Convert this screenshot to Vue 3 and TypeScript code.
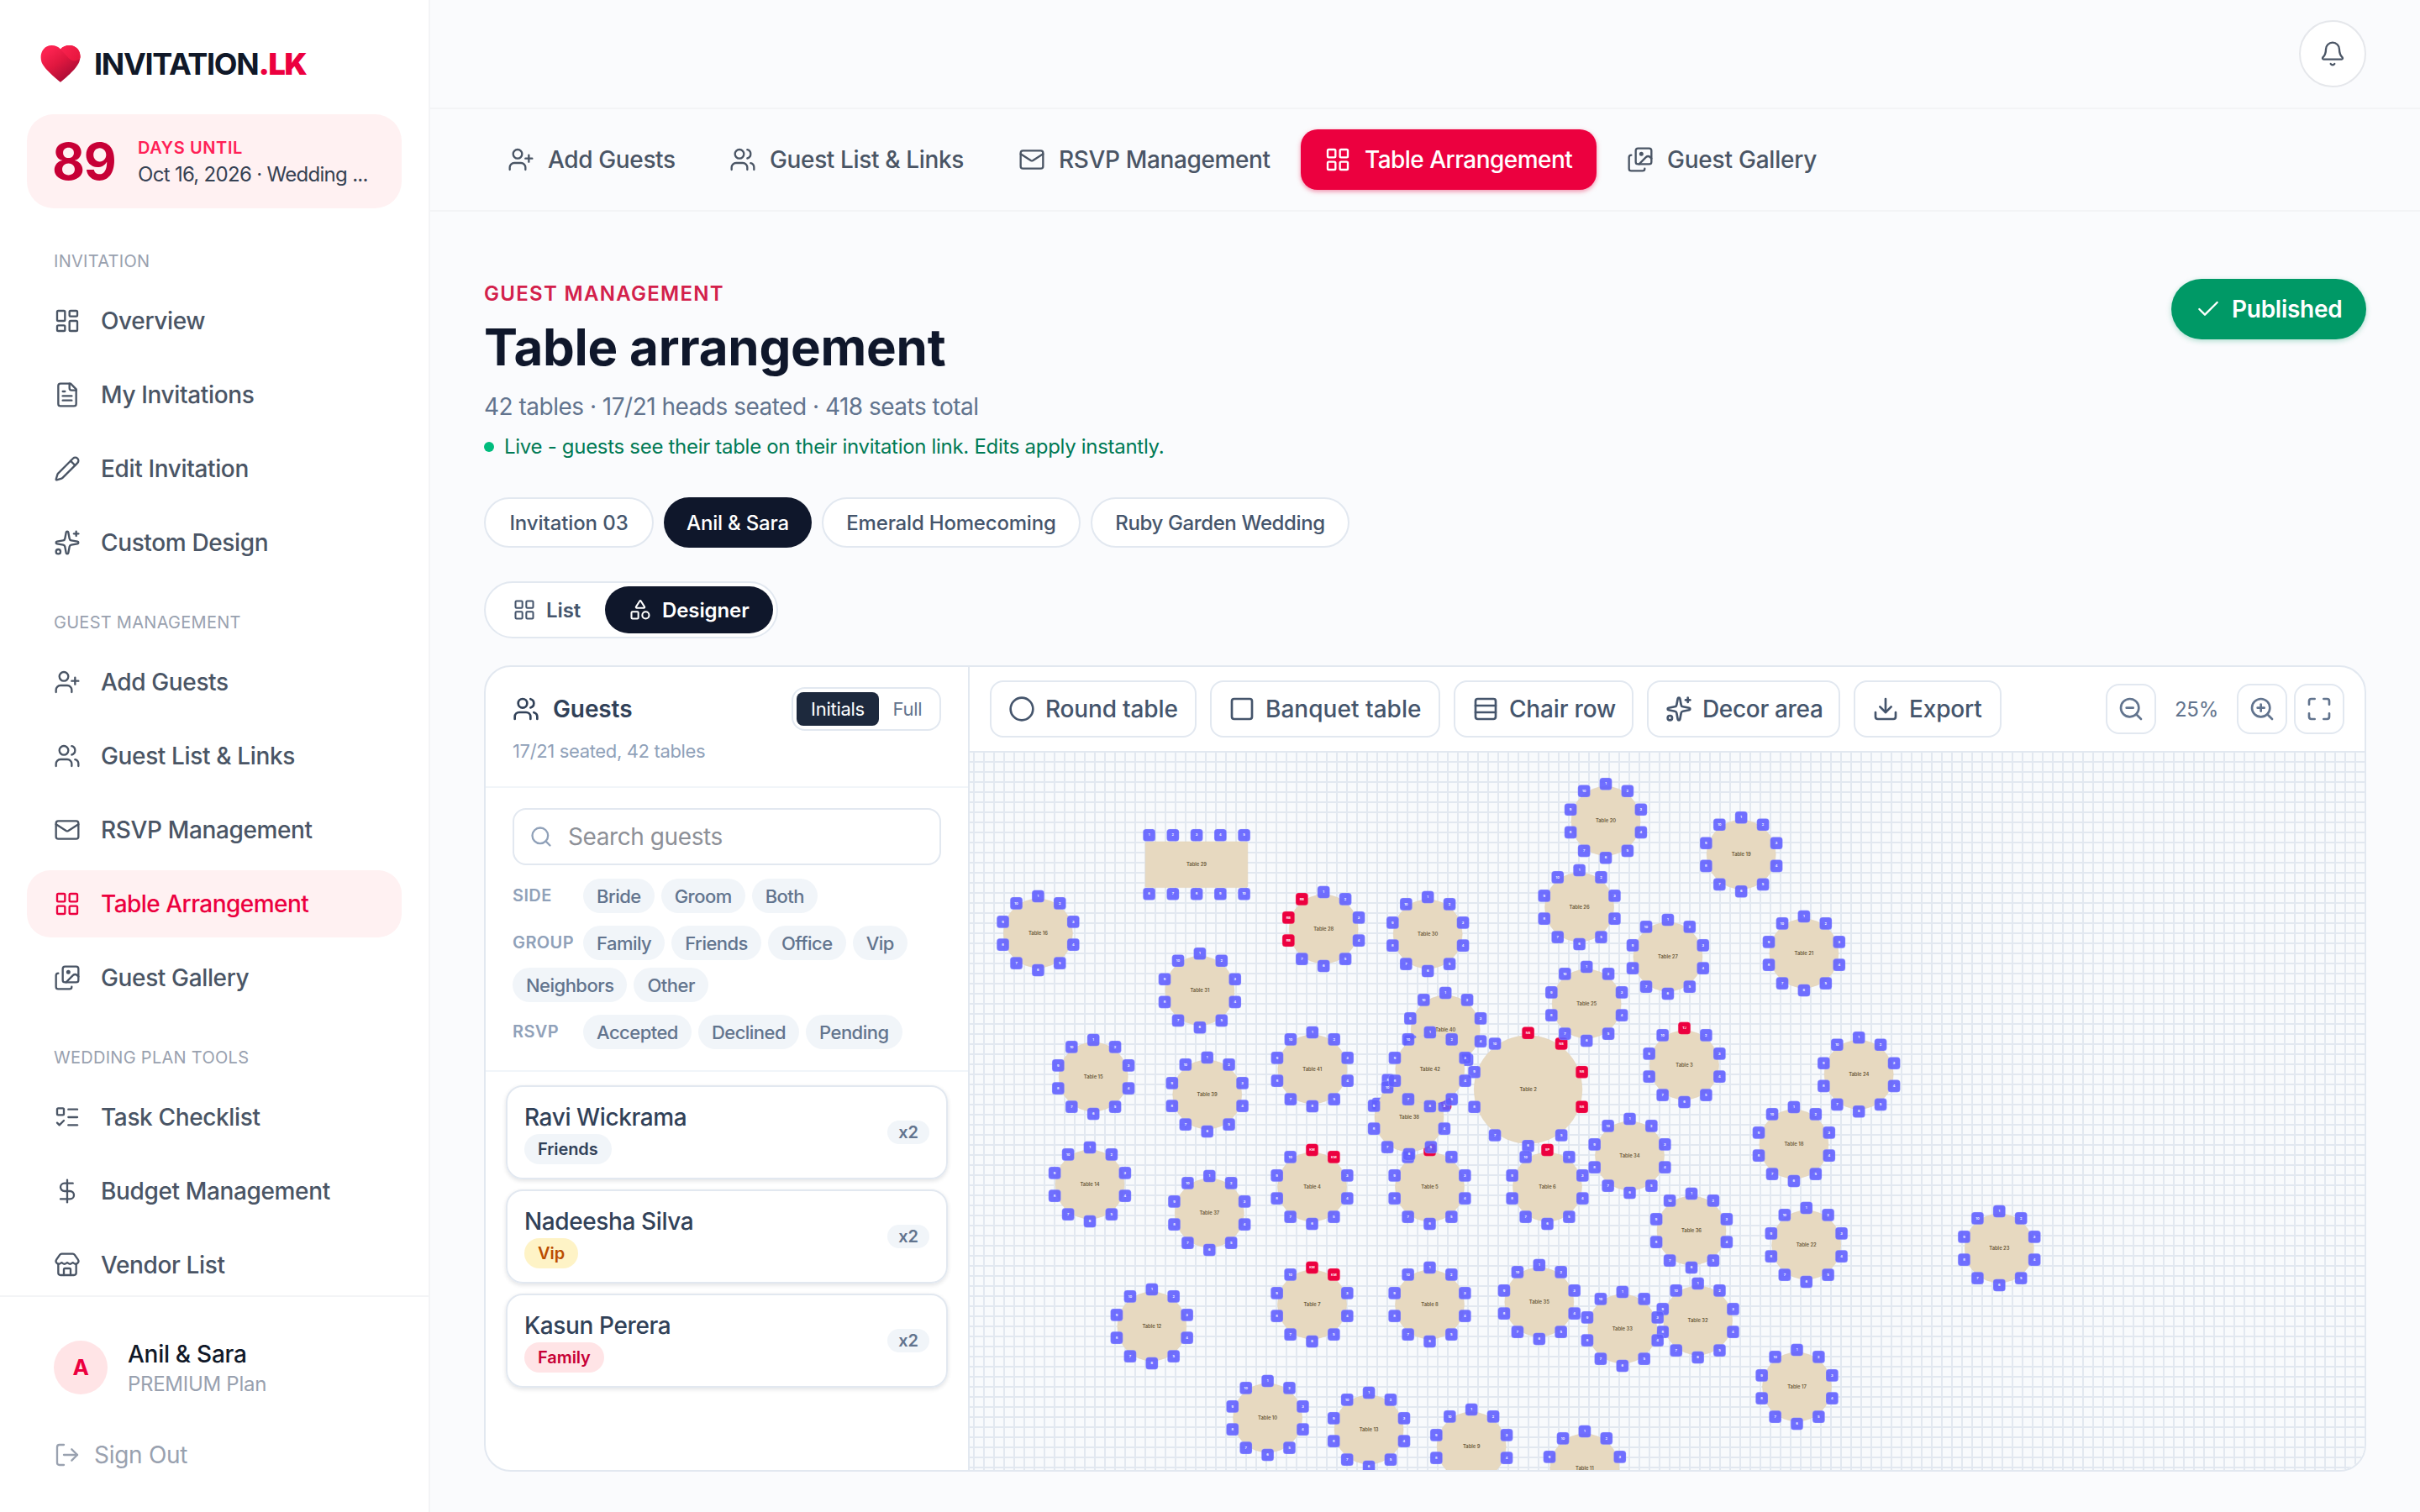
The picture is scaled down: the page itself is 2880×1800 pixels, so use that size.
<script setup lang="ts">
const icons: Record<string, string> = {
  dashboard:
    '<rect width="7" height="9" x="3" y="3" rx="1"/><rect width="7" height="5" x="14" y="3" rx="1"/><rect width="7" height="9" x="14" y="12" rx="1"/><rect width="7" height="5" x="3" y="16" rx="1"/>',
  file:
    '<path d="M15 2H6a2 2 0 0 0-2 2v16a2 2 0 0 0 2 2h12a2 2 0 0 0 2-2V7Z"/><path d="M14 2v4a2 2 0 0 0 2 2h4"/><path d="M10 9H8"/><path d="M16 13H8"/><path d="M16 17H8"/>',
  pencil:
    '<path d="M21.174 6.812a1 1 0 0 0-3.986-3.987L3.842 16.174a2 2 0 0 0-.5.83l-1.321 4.352a.5.5 0 0 0 .623.622l4.353-1.32a2 2 0 0 0 .83-.497z"/><path d="m15 5 4 4"/>',
  sparkles:
    '<path d="M11.017 2.814a1 1 0 0 1 1.966 0l1.051 5.558a2 2 0 0 0 1.594 1.594l5.558 1.051a1 1 0 0 1 0 1.966l-5.558 1.051a2 2 0 0 0-1.594 1.594l-1.051 5.558a1 1 0 0 1-1.966 0l-1.051-5.558a2 2 0 0 0-1.594-1.594l-5.558-1.051a1 1 0 0 1 0-1.966l5.558-1.051a2 2 0 0 0 1.594-1.594z"/><path d="M20 2v4"/><path d="M22 4h-4"/><circle cx="4" cy="20" r="2"/>',
  userPlus:
    '<path d="M16 21v-2a4 4 0 0 0-4-4H6a4 4 0 0 0-4 4v2"/><circle cx="9" cy="7" r="4"/><path d="M19 8v6"/><path d="M22 11h-6"/>',
  users:
    '<path d="M16 21v-2a4 4 0 0 0-4-4H6a4 4 0 0 0-4 4v2"/><path d="M16 3.128a4 4 0 0 1 0 7.744"/><path d="M22 21v-2a4 4 0 0 0-3-3.87"/><circle cx="9" cy="7" r="4"/>',
  mail:
    '<path d="m22 7-8.991 5.727a2 2 0 0 1-2.009 0L2 7"/><rect x="2" y="4" width="20" height="16" rx="2"/>',
  grid:
    '<rect width="7" height="7" x="3" y="3" rx="1"/><rect width="7" height="7" x="14" y="3" rx="1"/><rect width="7" height="7" x="14" y="14" rx="1"/><rect width="7" height="7" x="3" y="14" rx="1"/>',
  images:
    '<path d="m22 11-1.296-1.296a2.4 2.4 0 0 0-3.408 0L11 16"/><path d="M4 8a2 2 0 0 0-2 2v10a2 2 0 0 0 2 2h10a2 2 0 0 0 2-2"/><circle cx="13" cy="7" r="1" fill="currentColor"/><rect x="8" y="2" width="14" height="14" rx="2"/>',
  todo:
    '<path d="M13 5h8"/><path d="M13 12h8"/><path d="M13 19h8"/><path d="m3 17 2 2 4-4"/><rect x="3" y="4" width="6" height="6" rx="1"/>',
  dollar:
    '<path d="M12 2v20"/><path d="M17 5H9.5a3.5 3.5 0 0 0 0 7h5a3.5 3.5 0 0 1 0 7H6"/>',
  store:
    '<path d="M15 21v-5a1 1 0 0 0-1-1h-4a1 1 0 0 0-1 1v5"/><path d="M17.774 10.31a1.12 1.12 0 0 0-1.549 0 2.5 2.5 0 0 1-3.451 0 1.12 1.12 0 0 0-1.548 0 2.5 2.5 0 0 1-3.452 0 1.12 1.12 0 0 0-1.549 0 2.5 2.5 0 0 1-3.77-3.248l2.889-4.184A2 2 0 0 1 7 2h10a2 2 0 0 1 1.653.873l2.895 4.192a2.5 2.5 0 0 1-3.774 3.244"/><path d="M4 10.95V19a2 2 0 0 0 2 2h12a2 2 0 0 0 2-2v-8.05"/>',
  logout:
    '<path d="m16 17 5-5-5-5"/><path d="M21 12H9"/><path d="M9 21H5a2 2 0 0 1-2-2V5a2 2 0 0 1 2-2h4"/>',
  bell:
    '<path d="M10.268 21a2 2 0 0 0 3.464 0"/><path d="M3.262 15.326A1 1 0 0 0 4 17h16a1 1 0 0 0 .74-1.673C19.41 13.956 18 12.499 18 8A6 6 0 0 0 6 8c0 4.499-1.411 5.956-2.738 7.326"/>',
  check: '<path d="M20 6 9 17l-5-5"/>',
  shapes:
    '<path d="M8.3 10a.7.7 0 0 1-.626-1.079L11.4 3a.7.7 0 0 1 1.198-.043L16.3 8.9a.7.7 0 0 1-.572 1.1Z"/><rect x="3" y="14" width="7" height="7" rx="1"/><circle cx="17.5" cy="17.5" r="3.5"/>',
  search: '<path d="m21 21-4.34-4.34"/><circle cx="11" cy="11" r="8"/>',
  circle: '<circle cx="12" cy="12" r="10"/>',
  square: '<rect width="18" height="18" x="3" y="3" rx="2"/>',
  rows: '<rect width="18" height="18" x="3" y="3" rx="2"/><path d="M21 9H3"/><path d="M21 15H3"/>',
  download:
    '<path d="M12 15V3"/><path d="M21 15v4a2 2 0 0 1-2 2H5a2 2 0 0 1-2-2v-4"/><path d="m7 10 5 5 5-5"/>',
  zoomOut: '<circle cx="11" cy="11" r="8"/><path d="m21 21-4.35-4.35"/><path d="M8 11h6"/>',
  zoomIn: '<circle cx="11" cy="11" r="8"/><path d="m21 21-4.35-4.35"/><path d="M11 8v6"/><path d="M8 11h6"/>',
  maximize:
    '<path d="M8 3H5a2 2 0 0 0-2 2v3"/><path d="M21 8V5a2 2 0 0 0-2-2h-3"/><path d="M3 16v3a2 2 0 0 0 2 2h3"/><path d="M16 21h3a2 2 0 0 0 2-2v-3"/>',
}

interface NavItem { icon: string; label: string; active?: boolean }

const menu: { title: string; items: NavItem[] }[] = [
  {
    title: 'INVITATION',
    items: [
      { icon: 'dashboard', label: 'Overview' },
      { icon: 'file', label: 'My Invitations' },
      { icon: 'pencil', label: 'Edit Invitation' },
      { icon: 'sparkles', label: 'Custom Design' },
    ],
  },
  {
    title: 'GUEST MANAGEMENT',
    items: [
      { icon: 'userPlus', label: 'Add Guests' },
      { icon: 'users', label: 'Guest List & Links' },
      { icon: 'mail', label: 'RSVP Management' },
      { icon: 'grid', label: 'Table Arrangement', active: true },
      { icon: 'images', label: 'Guest Gallery' },
    ],
  },
  {
    title: 'WEDDING PLAN TOOLS',
    items: [
      { icon: 'todo', label: 'Task Checklist' },
      { icon: 'dollar', label: 'Budget Management' },
      { icon: 'store', label: 'Vendor List' },
    ],
  },
]

const tabs: NavItem[] = menu[1].items

const invitations = ['Invitation 03', 'Anil & Sara', 'Emerald Homecoming', 'Ruby Garden Wedding']

const filters = [
  { label: 'SIDE', options: ['Bride', 'Groom', 'Both'] },
  { label: 'GROUP', options: ['Family', 'Friends', 'Office', 'Vip', 'Neighbors', 'Other'] },
  { label: 'RSVP', options: ['Accepted', 'Declined', 'Pending'] },
]

const guests = [
  { name: 'Ravi Wickrama', group: 'Friends', heads: 2 },
  { name: 'Nadeesha Silva', group: 'Vip', heads: 2 },
  { name: 'Kasun Perera', group: 'Family', heads: 2 },
]

const tools: NavItem[] = [
  { icon: 'circle', label: 'Round table' },
  { icon: 'square', label: 'Banquet table' },
  { icon: 'rows', label: 'Chair row' },
  { icon: 'sparkles', label: 'Decor area' },
  { icon: 'download', label: 'Export' },
]

/* Round tables: number, centre x, centre y */
const roundTables: [number, number, number][] = [
  [1, 1680, 1314], [2, 1818.6, 1297], [3, 2004.5, 1268], [4, 1561.5, 1413],
  [5, 1701.5, 1413], [6, 1841.5, 1413], [7, 1561.5, 1553], [8, 1701.5, 1553],
  [9, 1751.2, 1722], [10, 1508.6, 1688], [11, 1885.9, 1748], [12, 1370.8, 1579],
  [13, 1629.1, 1702], [14, 1297, 1410], [15, 1301.2, 1282], [16, 1235.4, 1111],
  [17, 2138.5, 1651], [18, 2134.9, 1362], [19, 2072.2, 1017.3], [20, 1911, 977.3],
  [21, 2146.9, 1135], [22, 2149.7, 1482], [23, 2379.3, 1486], [24, 2212.2, 1279.3],
  [25, 1888.2, 1195], [26, 1879.6, 1080], [27, 1984.9, 1139], [28, 1575.2, 1106],
  [30, 1699.2, 1112], [31, 1427.9, 1179.3], [32, 2020.6, 1572], [33, 1930.8, 1582],
  [34, 1939.5, 1376], [35, 1831.8, 1550], [36, 2013, 1465], [37, 1439.3, 1444],
  [38, 1677, 1330], [39, 1436.7, 1303], [40, 1720.2, 1226], [41, 1561.8, 1273],
  [42, 1701.8, 1273],
]

/* Seated guests by table and chair */
const seated: Record<number, Record<number, string>> = {
  1: { 1: 'AF', 2: 'AF', 3: 'AF' },
  2: { 1: 'NS', 2: 'NS', 3: 'NS', 4: 'NS' },
  3: { 1: 'TJ' },
  4: { 1: 'KM', 2: 'KM' },
  5: { 1: 'SP' },
  6: { 1: 'SP' },
  7: { 1: 'KM', 2: 'KM' },
  28: { 8: 'RB', 9: 'RB', 10: 'RB' },
}

/* Lower edge of the visible part of the room */
const roomBottom = 1750

interface Chair { x: number; y: number; text: string; taken: boolean }

const tables = roundTables.map(([id, x, y]) => {
  const count = id === 1 ? 8 : 10
  const r = id === 1 ? 37 : id === 2 ? 64.3 : 41
  const orbit = r + 3
  const chairs: Chair[] = Array.from({ length: count }, (_, i) => {
    const a = (i * 2 * Math.PI) / count
    const guest = seated[id]?.[i + 1]
    return {
      x: x + Math.sin(a) * orbit,
      y: y - Math.cos(a) * orbit,
      text: guest ?? String(i + 1),
      taken: !!guest,
    }
  }).filter((c) => c.y - 7.5 < roomBottom)
  return { id, x, y, r, chairs }
})

const banquet = {
  x: 1424,
  y: 1029.3,
  chairs: Array.from({ length: 10 }, (_, i) => ({
    x: 1367.6 + (i % 5) * 28.25,
    y: i < 5 ? 994.3 : 1064.3,
    text: String(i + 1),
  })),
}
</script>

<template>
  <div class="app">
    <aside class="sidebar">
      <div class="logo">
        <svg class="heart" viewBox="0 0 48 44">
          <defs>
            <linearGradient id="heartBody" x1="0.25" y1="0.1" x2="0.75" y2="0.75">
              <stop offset="0" stop-color="#fb2350" />
              <stop offset="0.5" stop-color="#e0173f" />
              <stop offset="1" stop-color="#b40e37" />
            </linearGradient>
            <linearGradient id="heartFlap" x1="0" y1="0" x2="1" y2="0.6">
              <stop offset="0" stop-color="#fb2350" />
              <stop offset="1" stop-color="#e8173f" />
            </linearGradient>
          </defs>
          <path fill="url(#heartBody)" d="M24 44C21 41 5 29 1.500 20C-1.500 11 3 0 13.500 0C18 0 21.500 1.500 24 4.500C26.500 1.500 30 0 34.500 0C45 0 49.500 10 46.500 19C43 29 27 41 24 44Z" />
          <path fill="url(#heartFlap)" d="M24 4.500C26.500 1.500 30 0 34.500 0C44 0 48.500 8 47.500 15C44 19.500 38 19.500 34 15.500C30.500 11.500 27 8 24 4.500Z" />
        </svg>
        <span class="brand">INVITATION<b>.LK</b></span>
      </div>

      <div class="countdown">
        <span class="days">89</span>
        <div class="countdown-text">
          <span class="until">DAYS UNTIL</span>
          <span class="date">Oct 16, 2026 · Wedding ...</span>
        </div>
      </div>

      <nav class="menu">
        <section v-for="g in menu" :key="g.title">
          <h2>{{ g.title }}</h2>
          <a v-for="it in g.items" :key="it.label" class="item" :class="{ active: it.active }">
            <svg class="icon" viewBox="0 0 24 24" v-html="icons[it.icon]" />
            <span>{{ it.label }}</span>
          </a>
        </section>
      </nav>

      <footer class="account">
        <div class="profile">
          <span class="avatar">A</span>
          <div class="who">
            <span class="name">Anil &amp; Sara</span>
            <span class="plan">PREMIUM Plan</span>
          </div>
        </div>
        <a class="signout">
          <svg class="icon" viewBox="0 0 24 24" v-html="icons.logout" />
          <span>Sign Out</span>
        </a>
      </footer>
    </aside>

    <div class="main">
      <header class="topbar">
        <button class="bell"><svg class="icon" viewBox="0 0 24 24" v-html="icons.bell" /></button>
      </header>

      <nav class="tabs">
        <a v-for="t in tabs" :key="t.label" class="tab" :class="{ active: t.active }">
          <svg class="icon" viewBox="0 0 24 24" v-html="icons[t.icon]" />
          <span>{{ t.label }}</span>
        </a>
      </nav>

      <main class="content">
        <div class="heading">
          <div>
            <p class="eyebrow">GUEST MANAGEMENT</p>
            <h1>Table arrangement</h1>
            <p class="stats">42 tables · 17/21 heads seated · 418 seats total</p>
            <p class="live"><i></i><span>Live - guests see their table on their invitation link. Edits apply instantly.</span></p>
          </div>
          <button class="published">
            <svg class="icon" viewBox="0 0 24 24" v-html="icons.check" />
            <span>Published</span>
          </button>
        </div>

        <div class="pills">
          <button v-for="(p, i) in invitations" :key="p" class="pill" :class="{ active: i === 1 }"><span>{{ p }}</span></button>
        </div>

        <div class="views">
          <button class="view"><svg class="icon" viewBox="0 0 24 24" v-html="icons.grid" /><span>List</span></button>
          <button class="view active"><svg class="icon" viewBox="0 0 24 24" v-html="icons.shapes" /><span>Designer</span></button>
        </div>

        <div class="designer">
          <div class="panel">
            <div class="panel-head">
              <div class="panel-title">
                <svg class="icon" viewBox="0 0 24 24" v-html="icons.users" />
                <h3>Guests</h3>
                <div class="switch">
                  <button class="on">Initials</button>
                  <button>Full</button>
                </div>
              </div>
              <p>17/21 seated, 42 tables</p>
            </div>

            <div class="filters">
              <div class="search">
                <svg class="icon" viewBox="0 0 24 24" v-html="icons.search" />
                <span>Search guests</span>
              </div>
              <div v-for="f in filters" :key="f.label" class="filter">
                <span class="filter-label">{{ f.label }}</span>
                <button v-for="o in f.options" :key="o" class="chip">{{ o }}</button>
              </div>
            </div>

            <div class="guests">
              <div v-for="g in guests" :key="g.name" class="guest">
                <div>
                  <div class="guest-name">{{ g.name }}</div>
                  <span class="tag" :class="g.group.toLowerCase()">{{ g.group }}</span>
                </div>
                <span class="heads">x{{ g.heads }}</span>
              </div>
            </div>
          </div>

          <div class="stage">
            <div class="toolbar">
              <button v-for="t in tools" :key="t.label" class="tool">
                <svg class="icon" viewBox="0 0 24 24" v-html="icons[t.icon]" />
                <span>{{ t.label }}</span>
              </button>
              <div class="zoom">
                <button class="square"><svg class="icon" viewBox="0 0 24 24" v-html="icons.zoomOut" /></button>
                <span>25%</span>
                <button class="square"><svg class="icon" viewBox="0 0 24 24" v-html="icons.zoomIn" /></button>
                <button class="square"><svg class="icon" viewBox="0 0 24 24" v-html="icons.maximize" /></button>
              </div>
            </div>

            <svg class="canvas" viewBox="1154 896 1660 854">
              <defs>
                <pattern id="grid" x="1158" y="894" width="12" height="12" patternUnits="userSpaceOnUse">
                  <path class="grid-line" d="M0 0h12v2H2v10H0z" />
                </pattern>
              </defs>
              <rect x="1154" y="896" width="1660" height="854" fill="url(#grid)" />
              <g>
                <rect class="table" :x="banquet.x - 60.8" :y="banquet.y - 27.3" width="121.600" height="54.600" rx="2" />
                <text class="table-name" :x="banquet.x" :y="banquet.y + 2">Table 29</text>
                <g v-for="(c, i) in banquet.chairs" :key="i">
                  <rect class="chair" :x="c.x - 7.3" :y="c.y - 7.3" width="14.600" height="14.600" rx="3.500" />
                  <text class="seat" :x="c.x" :y="c.y + 1.1">{{ c.text }}</text>
                </g>
              </g>
              <g v-for="t in tables" :key="t.id">
                <circle class="table" :cx="t.x" :cy="t.y" :r="t.r" />
                <text class="table-name" :x="t.x" :y="t.y + 2">Table {{ t.id }}</text>
                <g v-for="(c, i) in t.chairs" :key="i">
                  <rect class="chair" :class="{ taken: c.taken }" :x="c.x - 7.3" :y="c.y - 7.3" width="14.600" height="14.600" rx="3.500" />
                  <text class="seat" :x="c.x" :y="c.y + 1.1">{{ c.text }}</text>
                </g>
              </g>
            </svg>
          </div>
        </div>
      </main>
    </div>
  </div>
</template>

<style>
body {
  margin: 0;
  background: #fafbfd;
}
</style>

<style scoped>
* {
  box-sizing: border-box;
  margin: 0;
  padding: 0;
}
button {
  font: inherit;
  letter-spacing: inherit;
  border: 0;
  background: none;
  color: inherit;
}
.app {
  display: flex;
  width: 2880px;
  height: 1800px;
  overflow: hidden;
  background: #fafbfd;
  font-family: Inter, "Liberation Sans", sans-serif;
  font-size: 28px;
  color: #4a5565;
  white-space: nowrap;
  letter-spacing: -0.01em;
}
.icon {
  width: 32px;
  height: 32px;
  flex: none;
  fill: none;
  stroke: currentColor;
  stroke-width: 1.75;
  stroke-linecap: round;
  stroke-linejoin: round;
}

/* Sidebar */
.sidebar {
  width: 512px;
  flex: none;
  display: flex;
  flex-direction: column;
  background: #fff;
  border-right: 2px solid #f3f4f6;
}
.logo {
  display: flex;
  align-items: center;
  gap: 16px;
  height: 136px;
  padding: 16px 0 0 48px;
  flex: none;
}
.heart {
  width: 48px;
  height: 44px;
}
.brand {
  font-size: 36px;
  font-weight: 700;
  letter-spacing: -0.036em;
  color: #101828;
}
.brand b {
  color: #ec003f;
}
.countdown {
  display: flex;
  align-items: center;
  gap: 24px;
  height: 112px;
  margin: 0 32px;
  padding: 0 32px 0 30px;
  border-radius: 32px;
  background: #fff1f2;
  flex: none;
}
.days {
  flex: none;
  width: 78px;
  font-size: 60px;
  font-weight: 700;
  line-height: 60px;
  letter-spacing: -0.02em;
  color: #c70036;
}
.countdown-text {
  display: flex;
  flex-direction: column;
}
.until {
  font-size: 20px;
  line-height: 32px;
  font-weight: 600;
  letter-spacing: 0.03em;
  color: #ff2056;
}
.date {
  font-size: 24px;
  line-height: 32px;
  letter-spacing: -0.029em;
  color: #364153;
}
.menu {
  flex: 1;
  min-height: 0;
  overflow: hidden;
  padding: 8px 32px 0;
}
.menu h2 {
  font-size: 20px;
  line-height: 30px;
  font-weight: 400;
  letter-spacing: 0.014em;
  color: #99a1af;
  padding: 40px 32px 16px;
}
.menu section {
  display: flex;
  flex-direction: column;
}
.item {
  display: flex;
  align-items: center;
  gap: 24px;
  height: 80px;
  padding: 0 32px;
  margin-bottom: 8px;
  border-radius: 28px;
  font-weight: 500;
  letter-spacing: -0.013em;
  flex: none;
}
.item:last-child {
  margin-bottom: 0;
}
.item.active {
  background: #fff1f2;
  color: #ec003f;
  letter-spacing: -0.019em;
}
.account {
  height: 258px;
  border-top: 2px solid #f3f4f6;
  padding: 50px 64px 0;
  flex: none;
}
.profile {
  display: flex;
  align-items: flex-start;
  gap: 24px;
}
.avatar {
  width: 64px;
  height: 64px;
  margin-top: 2px;
  border-radius: 50%;
  background: #ffe4e6;
  color: #ec003f;
  font-size: 26px;
  line-height: 64px;
  font-weight: 700;
  text-align: center;
}
.who {
  display: flex;
  flex-direction: column;
}
.name {
  line-height: 36px;
  font-weight: 500;
  color: #101828;
}
.plan {
  font-size: 24px;
  line-height: 36px;
  color: #99a1af;
}
.signout {
  display: flex;
  align-items: center;
  gap: 16px;
  height: 40px;
  margin-top: 46px;
  color: #99a1af;
}

/* Top bars */
.main {
  flex: 1;
  min-width: 0;
  display: flex;
  flex-direction: column;
}
.topbar {
  height: 130px;
  padding: 24px 64px 0;
  display: flex;
  justify-content: flex-end;
  border-bottom: 2px solid #f3f4f6;
  flex: none;
}
.bell {
  display: flex;
  align-items: center;
  justify-content: center;
  width: 80px;
  height: 80px;
  border: 2px solid #e5e7eb;
  border-radius: 50%;
  background: #fff;
}
.tabs {
  display: flex;
  gap: 8px;
  height: 122px;
  padding: 24px 64px 0;
  border-bottom: 2px solid #f3f4f6;
  flex: none;
}
.tab {
  display: flex;
  align-items: center;
  gap: 16px;
  height: 72px;
  padding: 0 0 0 28px;
  border-radius: 20px;
  font-weight: 500;
  letter-spacing: -0.013em;
}
.tab:nth-child(1) {
  width: 256px;
}
.tab:nth-child(2) {
  width: 336px;
}
.tab:nth-child(3) {
  width: 356px;
}
.tab:nth-child(4) {
  width: 352px;
}
.tab:nth-child(5) {
  letter-spacing: -0.008em;
}
.tab.active {
  background: #ec003f;
  color: #fff;
  letter-spacing: -0.019em;
  box-shadow: 0 2px 6px rgba(236, 0, 63, 0.25), 0 2px 4px rgba(236, 0, 63, 0.2);
}

/* Heading */
.content {
  flex: 1;
  padding: 80px 64px 0;
}
.heading {
  display: flex;
  justify-content: space-between;
  align-items: flex-start;
}
.eyebrow {
  font-size: 24px;
  line-height: 36px;
  font-weight: 600;
  letter-spacing: 0.054em;
  color: #d3204b;
}
h1 {
  margin-top: 8px;
  font-size: 60px;
  line-height: 75px;
  font-weight: 700;
  letter-spacing: -0.004em;
  color: #0f172b;
}
.stats {
  margin-top: 13px;
  line-height: 40px;
  letter-spacing: -0.018em;
  color: #62748e;
}
.live {
  display: flex;
  align-items: center;
  gap: 12px;
  margin-top: 12px;
  font-size: 24px;
  line-height: 32px;
  letter-spacing: -0.0125em;
  color: #007a55;
}
.live i {
  width: 12px;
  height: 12px;
  border-radius: 50%;
  background: #00bc7d;
}
.published {
  display: flex;
  align-items: center;
  gap: 12px;
  width: 232px;
  height: 72px;
  padding: 0 0 0 28px;
  border-radius: 36px;
  background: #009966;
  color: #fff;
  font-weight: 600;
  box-shadow: 0 2px 6px rgba(0, 153, 102, 0.3);
}
.pills {
  display: flex;
  gap: 12px;
  margin-top: 44px;
}
.pill {
  height: 60px;
  border: 2px solid #e2e8f0;
  border-radius: 30px;
  background: #fff;
  font-size: 24px;
  font-weight: 500;
  letter-spacing: -0.008em;
  color: #45556c;
}
.pill:nth-child(1) {
  width: 202px;
  letter-spacing: -0.004em;
}
.pill:nth-child(2) {
  width: 176px;
}
.pill:nth-child(3) {
  width: 308px;
}
.pill:nth-child(4) {
  width: 308px;
  letter-spacing: -0.016em;
}
.pill.active {
  background: #0f172b;
  border: 0;
  color: #fff;
}
.views {
  display: inline-flex;
  height: 68px;
  margin-top: 40px;
  padding: 4px;
  border: 2px solid #e2e8f0;
  border-radius: 34px;
  background: #fff;
}
.view {
  display: flex;
  align-items: center;
  gap: 12px;
  width: 138px;
  height: 56px;
  padding: 0 0 0 28px;
  border-radius: 28px;
  font-size: 24px;
  font-weight: 600;
  letter-spacing: -0.004em;
  color: #45556c;
}
.view .icon {
  width: 28px;
  height: 28px;
}
.view.active {
  width: 200px;
  background: #0f172b;
  color: #fff;
}

/* Designer */
.designer {
  display: flex;
  width: 2240px;
  height: 960px;
  margin-top: 32px;
  border: 2px solid #e2e8f0;
  border-radius: 32px;
  overflow: hidden;
  background: #fff;
}
.designer .icon {
  stroke-width: 2;
}
.panel {
  width: 576px;
  flex: none;
  border-right: 2px solid #e2e8f0;
}
.panel-head {
  height: 144px;
  padding: 24px 32px 0;
  border-bottom: 2px solid #f1f5f9;
}
.panel-title {
  display: flex;
  align-items: center;
  height: 52px;
  color: #314158;
}
.panel-title h3 {
  flex: 1;
  margin-left: 16px;
  font-size: 28px;
  font-weight: 600;
  letter-spacing: -0.004em;
}
.switch {
  display: flex;
  height: 52px;
  padding: 4px;
  border: 2px solid #e2e8f0;
  border-radius: 16px;
  font-size: 22px;
  color: #62748e;
}
.switch button {
  width: 68px;
  height: 40px;
  border-radius: 8px;
}
.switch .on {
  width: 98px;
  background: #1d293d;
  color: #fff;
}
.panel-head p {
  margin-top: 8px;
  font-size: 22px;
  line-height: 32px;
  letter-spacing: -0.016em;
  color: #90a1b9;
}
.filters {
  height: 338px;
  padding: 24px 32px 0;
  border-bottom: 2px solid #f1f5f9;
}
.search {
  display: flex;
  align-items: center;
  gap: 18px;
  height: 68px;
  padding: 0 18px;
  margin-bottom: 16px;
  border: 2px solid #e2e8f0;
  border-radius: 16px;
  letter-spacing: -0.015em;
  color: #8d9097;
}
.search .icon {
  width: 28px;
  height: 28px;
  color: #90a1b9;
}
.filter {
  display: flex;
  flex-wrap: wrap;
  gap: 9px 8px;
  margin-bottom: 15px;
}
.filter-label {
  width: 76px;
  font-size: 20px;
  line-height: 41px;
  font-weight: 600;
  letter-spacing: 0.02em;
  color: #90a1b9;
}
.chip {
  height: 41px;
  padding: 0 16px;
  border-radius: 21px;
  background: #f1f5f9;
  font-size: 22px;
  font-weight: 500;
  letter-spacing: -0.024em;
  color: #62748e;
}
.guests {
  display: flex;
  flex-direction: column;
  gap: 12px;
  padding: 16px 24px;
}
.guest {
  display: flex;
  justify-content: space-between;
  align-items: center;
  height: 112px;
  padding: 0 20px;
  border: 2px solid #e2e8f0;
  border-radius: 20px;
  box-shadow: 0 2px 5px rgba(15, 23, 43, 0.12);
}
.guest-name {
  line-height: 40px;
  font-weight: 500;
  letter-spacing: -0.014em;
  color: #314158;
}
.tag {
  display: block;
  width: fit-content;
  height: 36px;
  line-height: 36px;
  padding: 0 16px;
  border-radius: 18px;
  font-size: 20px;
  font-weight: 600;
  letter-spacing: -0.004em;
}
.tag.friends {
  background: #f1f5f9;
  color: #314158;
}
.tag.vip {
  background: #fef3c6;
  color: #bb4d00;
}
.tag.family {
  background: #ffe4e6;
  color: #c70036;
}
.heads {
  height: 28px;
  line-height: 28px;
  padding: 0 13px;
  border-radius: 14px;
  background: #f1f5f9;
  font-size: 20px;
  font-weight: 600;
  letter-spacing: 0;
  color: #62748e;
}
.stage {
  flex: 1;
  min-width: 0;
  display: flex;
  flex-direction: column;
}
.toolbar {
  display: flex;
  gap: 16px;
  height: 102px;
  padding: 16px 24px 0;
  border-bottom: 2px solid #e2e8f0;
  flex: none;
}
.tool {
  display: flex;
  align-items: center;
  gap: 12px;
  height: 68px;
  padding: 0 0 0 20px;
  border: 2px solid #e2e8f0;
  border-radius: 16px;
  font-weight: 500;
  letter-spacing: -0.006em;
  color: #45556c;
}
.tool:nth-child(1) {
  width: 246px;
}
.tool:nth-child(2) {
  width: 274px;
  letter-spacing: 0.001em;
}
.tool:nth-child(3) {
  width: 214px;
}
.tool:nth-child(4) {
  width: 230px;
  letter-spacing: -0.012em;
}
.tool:nth-child(5) {
  width: 176px;
}
.zoom {
  display: flex;
  align-items: center;
  gap: 8px;
  height: 68px;
  margin-left: auto;
  color: #62748e;
  font-size: 24px;
}
.zoom span {
  width: 80px;
  text-align: center;
}
.square {
  display: flex;
  align-items: center;
  justify-content: center;
  width: 60px;
  height: 60px;
  border: 2px solid #e2e8f0;
  border-radius: 16px;
}
.canvas {
  display: block;
  width: 1660px;
  height: 854px;
  background: #f8fafc;
}
.grid-line {
  fill: #e2e8f0;
}
.table {
  fill: #e7d9c0;
  stroke: #e0d1b4;
  stroke-width: 0.5;
}
.table-name {
  font-size: 5.8px;
  font-weight: 600;
  fill: #6b5a3a;
  text-anchor: middle;
  letter-spacing: 0;
}
.chair {
  fill: #615fff;
  fill-opacity: 0.9;
  stroke: #c6d2ff;
  stroke-opacity: 0.5;
  stroke-width: 0.5;
}
.chair.taken {
  fill: #ec003f;
  fill-opacity: 1;
  stroke: #ff8fa8;
}
.seat {
  font-size: 4px;
  font-weight: 600;
  fill: #fff;
  text-anchor: middle;
  letter-spacing: 0;
}
</style>
